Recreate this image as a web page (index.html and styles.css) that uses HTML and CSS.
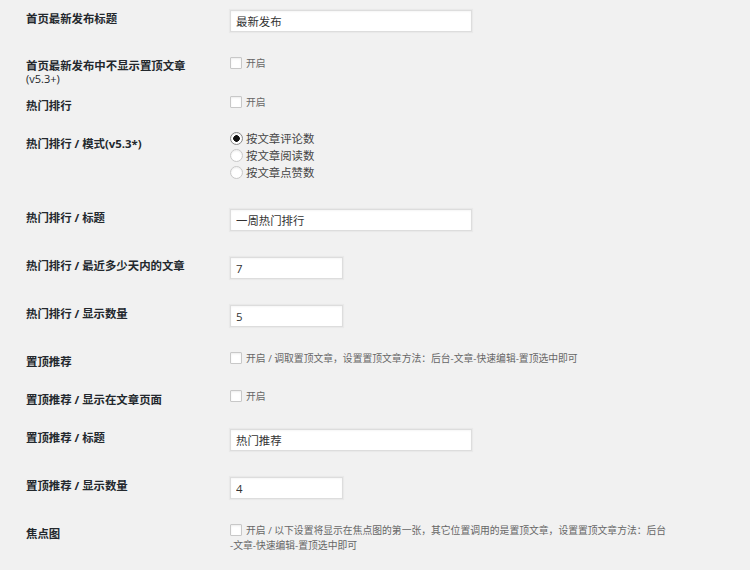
FILE: index.html
```html
<!DOCTYPE html>
<html lang="zh-CN">
<head>
    <meta charset="UTF-8">
    <meta name="viewport" content="width=device-width, initial-scale=1.0">
    <title>主题设置</title>
    <link rel="stylesheet" href="styles.css">
</head>
<body>
    <table class="form-table">
        <tr class="row-text">
            <th>首页最新发布标题</th>
            <td><input type="text" class="regular-text" value="最新发布"></td>
        </tr>
        <tr class="row-check">
            <th class="two-line">首页最新发布中不显示置顶文章<span class="note">(v5.3+)</span></th>
            <td><label class="check"><input type="checkbox">开启</label></td>
        </tr>
        <tr class="row-check">
            <th>热门排行</th>
            <td><label class="check"><input type="checkbox">开启</label></td>
        </tr>
        <tr class="row-radio">
            <th>热门排行 / 模式(v5.3*)</th>
            <td>
                <label class="radio"><input type="radio" name="mode" checked>按文章评论数</label>
                <label class="radio"><input type="radio" name="mode">按文章阅读数</label>
                <label class="radio"><input type="radio" name="mode">按文章点赞数</label>
            </td>
        </tr>
        <tr class="row-text">
            <th>热门排行 / 标题</th>
            <td><input type="text" class="regular-text" value="一周热门排行"></td>
        </tr>
        <tr class="row-text">
            <th>热门排行 / 最近多少天内的文章</th>
            <td><input type="text" class="small-text" value="7"></td>
        </tr>
        <tr class="row-text">
            <th>热门排行 / 显示数量</th>
            <td><input type="text" class="small-text" value="5"></td>
        </tr>
        <tr class="row-check">
            <th>置顶推荐</th>
            <td><label class="check"><input type="checkbox">开启 / 调取置顶文章，设置置顶文章方法：后台-文章-快速编辑-置顶选中即可</label></td>
        </tr>
        <tr class="row-check">
            <th>置顶推荐 / 显示在文章页面</th>
            <td><label class="check"><input type="checkbox">开启</label></td>
        </tr>
        <tr class="row-text">
            <th>置顶推荐 / 标题</th>
            <td><input type="text" class="regular-text" value="热门推荐"></td>
        </tr>
        <tr class="row-text">
            <th>置顶推荐 / 显示数量</th>
            <td><input type="text" class="small-text" value="4"></td>
        </tr>
        <tr class="row-check">
            <th>焦点图</th>
            <td><label class="check"><input type="checkbox">开启 / 以下设置将显示在焦点图的第一张，其它位置调用的是置顶文章，设置置顶文章方法：后台<br>-文章-快速编辑-置顶选中即可</label></td>
        </tr>
    </table>
</body>
</html>
```

FILE: styles.css
```css
body {
    margin: 0;
    padding: 0 0 0 26px;
    background: #f1f1f1;
    color: #23282d;
    font-family: "Open Sans", "Noto Sans CJK SC", sans-serif;
}
.form-table {
    border-collapse: collapse;
    border-spacing: 0;
    margin-top: -3px;
}
.form-table th {
    width: 204px;
    padding: 14px 0 0 0;
    text-align: left;
    vertical-align: top;
    font-size: 11.4px;
    font-weight: 700;
    line-height: 16px;
    color: #23282d;
}
.form-table th.two-line {
    padding-top: 13px;
    line-height: 15px;
}
.form-table td {
    padding: 0;
    vertical-align: top;
    line-height: 0;
}
.note {
    display: block;
    font-size: 11px;
    font-weight: 400;
    line-height: 11px;
}
.row-text td {
    padding: 13px 0;
}
.row-check td {
    padding: 11px 0 12px 0;
}
.row-radio td {
    padding: 8px 0 15px 0;
}
input[type="text"] {
    display: block;
    box-sizing: border-box;
    height: 22px;
    margin: 0;
    padding: 0 5px;
    border: 1px solid #ddd;
    background: #fff;
    box-shadow: 0 0 1px 1px rgba(0, 0, 0, 0.03), inset 0 1px 2px rgba(0, 0, 0, 0.04);
    font-family: "Open Sans", "Noto Sans CJK SC", sans-serif;
    font-size: 11.4px;
    color: #333;
    outline: none;
}
.regular-text {
    width: 242px;
}
.small-text {
    width: 113px;
}
.check {
    display: block;
    font-size: 9.8px;
    line-height: 15px;
    color: #666;
}
.check input {
    -webkit-appearance: none;
    appearance: none;
    box-sizing: border-box;
    width: 12px;
    height: 12px;
    margin: 1px 4px 0 0;
    vertical-align: top;
    border: 1px solid #c8c8c8;
    border-radius: 1px;
    background: #fff;
    box-shadow: inset 0 1px 2px rgba(0, 0, 0, 0.08);
}
.radio {
    display: flex;
    align-items: center;
    height: 17px;
    line-height: 17px;
    font-size: 11.4px;
    color: #444;
}
.radio input {
    -webkit-appearance: none;
    appearance: none;
    box-sizing: border-box;
    width: 13px;
    height: 13px;
    margin: 0 3px 0 0;
    border: 1px solid #c8c8c8;
    border-radius: 50%;
    background: #fff;
    box-shadow: inset 0 1px 2px rgba(0, 0, 0, 0.08);
}
.radio input:checked {
    border-color: #888;
    background: radial-gradient(circle, #111 0 3px, #fff 3.6px);
}
```
